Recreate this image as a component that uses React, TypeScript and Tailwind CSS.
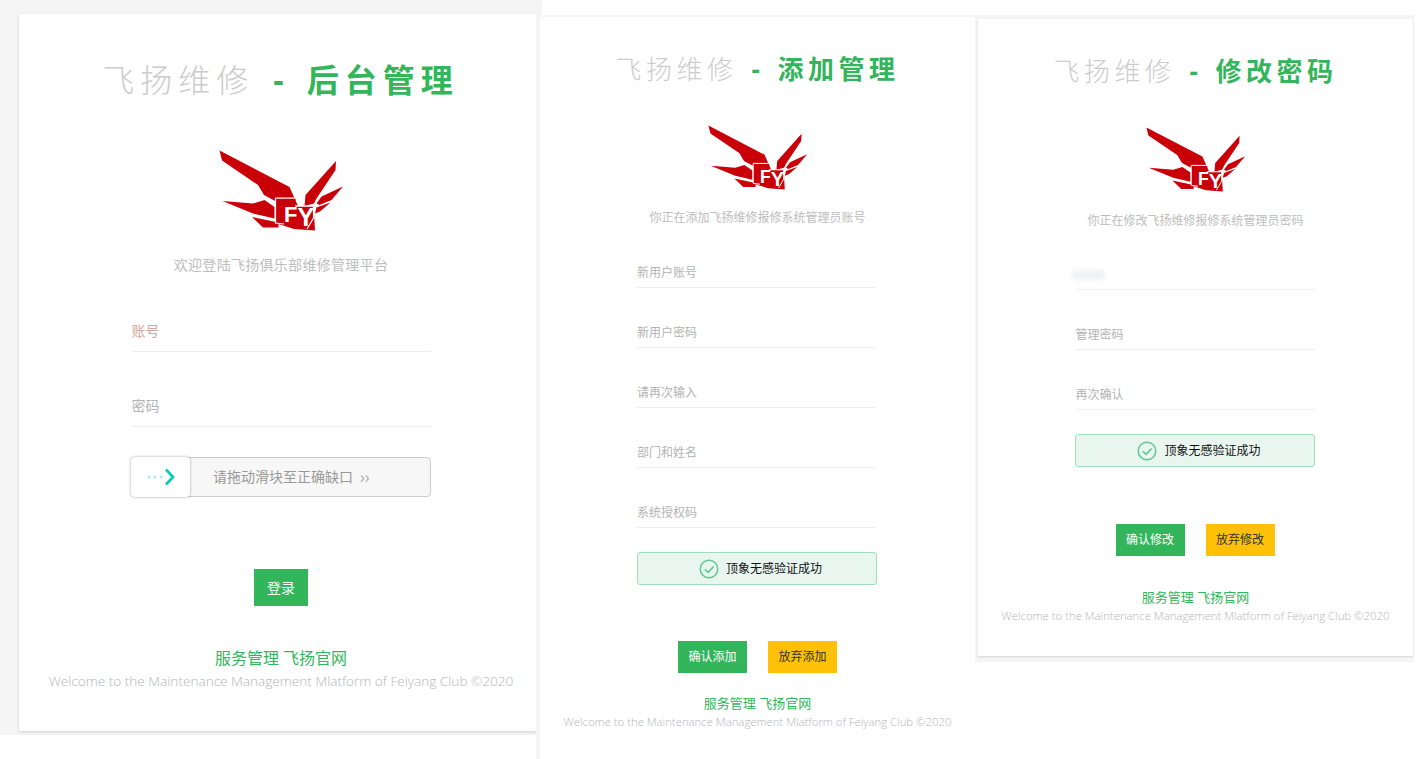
import React from 'react'

const CJK = "font-['Open_Sans','Noto_Sans_CJK_SC',sans-serif]"

const Logo: React.FC<{ className: string }> = ({ className }) => (
  <svg viewBox="0 0 250 170" className={className}>
    <g fill="#c90008">
      <path d="M1 1 L141 74 L158 112 L118 96 L116 104 L90 90 L78 70 L6 21 Z" />
      <path d="M7 102 L68 107 L91 100 L111 114 L111 137 L68 127 Z" />
      <path d="M66 134 L119 145 L119 155 L88 155 Z" />
      <path d="M234 22 L233 40 L195 97 L190 107 L171 112 L173 90 Z" />
      <path d="M248 73 L225 100 L201 110 L195 107 L205 93 Z" />
      <path d="M223 105 L202 123 L192 127 L195 115 Z" />
      <path d="M113 96 L153 96 L153 112 L189 112 L192 161 L150 158 L113 146 Z" />
    </g>
    <path d="M113 96 L153 96 M113 96 L113 146 L130 148 M153 112 L189 112 L189 136 L176 158" fill="none" stroke="#fff" strokeWidth="2.5" />
    <text fontWeight="700" fill="#fff" fontFamily="'Liberation Sans',sans-serif">
      <tspan x="130" y="144" fontSize="44">F</tspan>
      <tspan x="157" y="152" fontSize="50">Y</tspan>
    </text>
  </svg>
)

const Title: React.FC<{ green: string; big?: boolean }> = ({ green, big }) => (
  <h1 className={big ? 'flex text-[32px] leading-[40px] tracking-[6px]' : 'flex text-[26px] leading-[36px] tracking-[4.5px]'}>
    <span className="text-[#cccccc] font-light">飞扬维修</span>
    <span className={big ? 'ml-[19px] mr-[17px] text-[#33b55c] font-bold' : 'ml-[14px] mr-[13px] text-[#33b55c] font-bold'}>-</span>
    <span className="text-[#33b55c] font-bold">{green}</span>
  </h1>
)

const Field: React.FC<{ label: string; blur?: boolean }> = ({ label, blur }) => (
  <div className="h-[60px] flex flex-col justify-end">
    <div className="h-[30px] border-b border-[#eeeeee] text-xs leading-[30px] text-[#b3b3b3]">
      {blur ? <div className="mt-[10px] ml-[-5px] w-[35px] h-[10px] rounded-full bg-[#f0f1f2] blur-[2px]" /> : label}
    </div>
  </div>
)

const Verified: React.FC = () => (
  <div className="h-[33px] w-[240px] rounded-[3px] border border-[#9fe0bc] bg-[#e9f6f0] flex items-center justify-center gap-[7px] pl-[8px] text-xs text-[#111111]">
    <svg viewBox="0 0 24 24" className="w-[20px] h-[20px]" fill="none" stroke="#5ec892" strokeWidth="1.8">
      <circle cx="12" cy="12" r="10.5" />
      <path d="M7 12.5 L11 16 L17.5 9" strokeWidth="2" />
    </svg>
    <span>顶象无感验证成功</span>
  </div>
)

const Footer: React.FC = () => (
  <div className="text-center">
    <div className="text-[13px] leading-[20px] text-[#33b55c]">服务管理 飞扬官网</div>
    <div className="text-[11.35px] leading-[18px] font-light text-[#b5b5bb] whitespace-nowrap">Welcome to the Maintenance Management Mlatform of Feiyang Club ©2020</div>
  </div>
)

const Buttons: React.FC<{ ok: string; no: string }> = ({ ok, no }) => (
  <div className="flex justify-center gap-[21px]">
    <button className="w-[69px] h-[32px] bg-[#33b55c] text-white text-xs">{ok}</button>
    <button className="w-[69px] h-[32px] bg-[#ffc107] text-[#333333] text-xs">{no}</button>
  </div>
)

const LoginCard: React.FC = () => (
  <div className="w-[542px] h-[735px] shrink-0 bg-[#f5f5f5] pt-[14px] pl-[19px]">
    <div className="w-[518px] h-[717px] bg-white pl-[6px] shadow-[0_1px_3px_rgba(0,0,0,0.15)] flex flex-col items-center">
      <div className="mt-[46px] mr-[1px]"><Title green="后台管理" big /></div>
      <Logo className="mt-[50px] w-[125px] h-[85px]" />
      <p className="mt-[20px] text-sm tracking-[0.3px] leading-[20px] text-[#bdbdbd]">欢迎登陆飞扬俱乐部维修管理平台</p>
      <div className="w-[299px] mt-[17px] h-[60px] border-b border-[#eeeeee] flex items-end pb-[10px] text-sm text-[#cfa89e]">账号</div>
      <div className="w-[299px] mt-[15px] h-[60px] border-b border-[#eeeeee] flex items-end pb-[10px] text-sm text-[#b3b3b3]">密码</div>
      <div className="relative w-[300px] h-[40px] mt-[30px] rounded-[4px] border border-[#cccccc] bg-[#f7f7f7] flex items-center pl-[81px] text-sm text-[#999999]">
        <div className="absolute -left-px -top-px w-[59px] h-[40px] rounded-[4px] bg-white shadow-[0_0_3px_rgba(0,0,0,0.35)] flex items-center justify-center">
          <svg viewBox="0 0 30 20" className="w-[30px] h-[20px]" fill="none">
            <path d="M3 10 H3.1 M9 10 H9.1 M15 10 H15.1" stroke="#a5efe5" strokeWidth="2.8" strokeLinecap="round" />
            <path d="M20 2.5 L27 10 L20 17.5" stroke="#00cdb8" strokeWidth="2.6" />
          </svg>
        </div>
        <span>请拖动滑块至正确缺口</span>
        <span className="ml-[7px] text-base text-[#aaaaaa]">››</span>
      </div>
      <button className="mt-[72px] w-[54px] h-[37px] bg-[#33b55c] text-white text-sm">登录</button>
      <div className="mt-[40px] text-center">
        <div className="text-base leading-[24px] text-[#33b55c]">服务管理 飞扬官网</div>
        <div className="text-[13.6px] leading-[22px] font-light text-[#b5b5bb] whitespace-nowrap">Welcome to the Maintenance Management Mlatform of Feiyang Club ©2020</div>
      </div>
    </div>
  </div>
)

const AddCard: React.FC = () => (
  <div className="relative ml-[-6px] mt-[15px] w-[439px] h-[744px] shrink-0 bg-white border-l-[4px] border-t-[2px] border-[#f5f5f5] flex flex-col items-center">
    <div className="mt-[34px]"><Title green="添加管理" /></div>
    <Logo className="mt-[38px] w-[100px] h-[68px]" />
    <p className="mt-[16px] text-xs leading-[18px] text-[#bdbdbd]">你正在添加飞扬维修报修系统管理员账号</p>
    <div className="w-[239px] mt-[1px] mr-[2px]">
      <Field label="新用户账号" />
      <Field label="新用户密码" />
      <Field label="请再次输入" />
      <Field label="部门和姓名" />
      <Field label="系统授权码" />
    </div>
    <div className="mt-[24px] mr-[2px]"><Verified /></div>
    <div className="mt-[56px]"><Buttons ok="确认添加" no="放弃添加" /></div>
    <div className="mt-[20px]"><Footer /></div>
  </div>
)

const PasswordCard: React.FC = () => (
  <div className="relative mt-[15px] w-[439px] h-[647px] shrink-0 bg-[#f5f5f5] pl-[3px] pt-[4px] pr-[1px] pb-[6px]">
    <div className="h-full bg-white shadow-[0_1px_2px_rgba(0,0,0,0.12)] flex flex-col items-center">
      <div className="mt-[34px]"><Title green="修改密码" /></div>
      <Logo className="mt-[38px] w-[100px] h-[68px]" />
      <p className="mt-[17px] text-xs leading-[18px] text-[#bdbdbd]">你正在修改飞扬维修报修系统管理员密码</p>
      <div className="w-[239px] mr-[1px]">
        <Field label="" blur />
        <Field label="管理密码" />
        <Field label="再次确认" />
      </div>
      <div className="mt-[24px] mr-[1px]"><Verified /></div>
      <div className="mt-[57px] mr-[1px]"><Buttons ok="确认修改" no="放弃修改" /></div>
      <div className="mt-[31px]"><Footer /></div>
    </div>
  </div>
)

export default function App() {
  return (
    <div className={`flex items-start w-[1416px] h-[759px] overflow-hidden bg-white ${CJK}`}>
      <LoginCard />
      <AddCard />
      <PasswordCard />
    </div>
  )
}
